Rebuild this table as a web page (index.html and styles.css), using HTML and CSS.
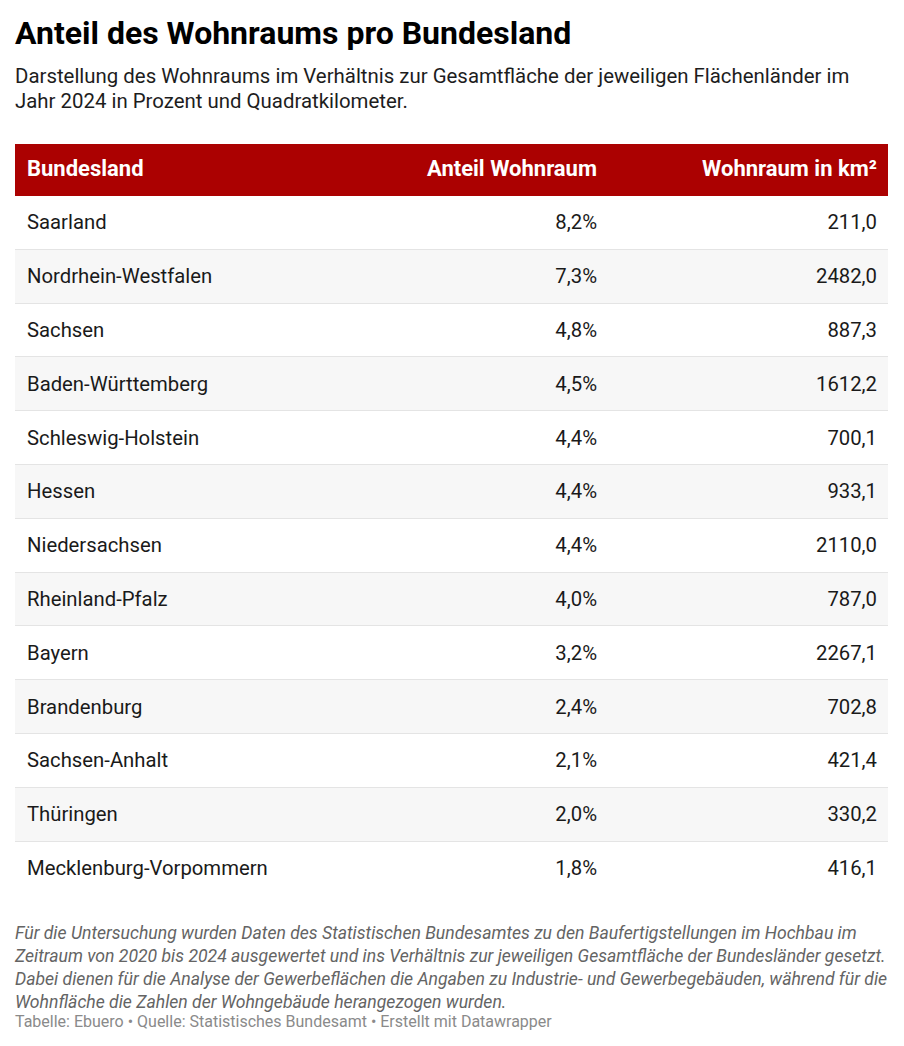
FILE: index.html
```html
<!DOCTYPE html>
<html lang="de">
<head>
<meta charset="utf-8">
<title>Anteil des Wohnraums pro Bundesland</title>
<link rel="stylesheet" href="styles.css">
</head>
<body>
<div class="chart">
  <h1 class="title">Anteil des Wohnraums pro Bundesland</h1>
  <p class="subtitle">Darstellung des Wohnraums im Verhältnis zur Gesamtfläche der jeweiligen Flächenländer im Jahr 2024 in Prozent und Quadratkilometer.</p>
  <table class="data">
    <thead>
      <tr>
        <th class="col-name">Bundesland</th>
        <th class="col-num col-share">Anteil Wohnraum</th>
        <th class="col-num col-area">Wohnraum in km²</th>
      </tr>
    </thead>
    <tbody>
      <tr><td>Saarland</td><td class="num">8,2%</td><td class="num">211,0</td></tr>
      <tr><td>Nordrhein-Westfalen</td><td class="num">7,3%</td><td class="num">2482,0</td></tr>
      <tr><td>Sachsen</td><td class="num">4,8%</td><td class="num">887,3</td></tr>
      <tr><td>Baden-Württemberg</td><td class="num">4,5%</td><td class="num">1612,2</td></tr>
      <tr><td>Schleswig-Holstein</td><td class="num">4,4%</td><td class="num">700,1</td></tr>
      <tr><td>Hessen</td><td class="num">4,4%</td><td class="num">933,1</td></tr>
      <tr><td>Niedersachsen</td><td class="num">4,4%</td><td class="num">2110,0</td></tr>
      <tr><td>Rheinland-Pfalz</td><td class="num">4,0%</td><td class="num">787,0</td></tr>
      <tr><td>Bayern</td><td class="num">3,2%</td><td class="num">2267,1</td></tr>
      <tr><td>Brandenburg</td><td class="num">2,4%</td><td class="num">702,8</td></tr>
      <tr><td>Sachsen-Anhalt</td><td class="num">2,1%</td><td class="num">421,4</td></tr>
      <tr><td>Thüringen</td><td class="num">2,0%</td><td class="num">330,2</td></tr>
      <tr><td>Mecklenburg-Vorpommern</td><td class="num">1,8%</td><td class="num">416,1</td></tr>
    </tbody>
  </table>
  <p class="notes">Für die Untersuchung wurden Daten des Statistischen Bundesamtes zu den Baufertigstellungen im Hochbau im Zeitraum von 2020 bis 2024 ausgewertet und ins Verhältnis zur jeweiligen Gesamtfläche der Bundesländer gesetzt. Dabei dienen für die Analyse der Gewerbeflächen die Angaben zu Industrie- und Gewerbegebäuden, während für die Wohnfläche die Zahlen der Wohngebäude herangezogen wurden.</p>
  <p class="footer">Tabelle: Ebuero • Quelle: Statistisches Bundesamt • Erstellt mit Datawrapper</p>
</div>
</body>
</html>
```

FILE: styles.css
```css
html, body {
  margin: 0;
  padding: 0;
  background: #ffffff;
}

body {
  font-family: Roboto, "Liberation Sans", Arial, sans-serif;
  color: #181818;
}

.chart {
  width: 873px;
  padding: 14px 16px 0 15px;
}

.title {
  margin: 0;
  font-size: 32px;
  line-height: 38px;
  font-weight: 700;
  color: #000000;
}

.subtitle {
  margin: 12px 0 0 0;
  font-size: 20.4px;
  line-height: 25px;
  color: #1d1d1d;
}

.data {
  width: 873px;
  margin-top: 30px;
  border-collapse: collapse;
  table-layout: fixed;
  font-size: 20.3px;
}

.data th {
  background: #ab0101;
  color: #ffffff;
  font-size: 22px;
  font-weight: 700;
  height: 49px;
  padding: 0 12px 3px 12px;
  vertical-align: middle;
  text-align: left;
}

.data th.col-num {
  text-align: right;
}

.col-name {
  width: 291px;
}

.col-share {
  width: 255px;
}

.col-area {
  width: 256px;
}

.data th.col-area {
  padding-right: 11px;
}

.data td {
  height: 52.8px;
  padding: 0 12px;
  border-bottom: 1px solid #e4e4e4;
  vertical-align: middle;
  color: #1a1a1a;
}

.data tbody tr:nth-child(even) td {
  background: #f7f7f7;
}

.data tbody tr:last-child td {
  border-bottom: none;
}

.data td.num {
  text-align: right;
}

.data td:last-child {
  padding-right: 11px;
}

.notes {
  margin: 28px 0 0 0;
  font-size: 17.6px;
  line-height: 23px;
  font-style: italic;
  color: #646464;
}

.footer {
  margin: 0;
  font-size: 16px;
  line-height: 16px;
  color: #8a8a8a;
}
```
